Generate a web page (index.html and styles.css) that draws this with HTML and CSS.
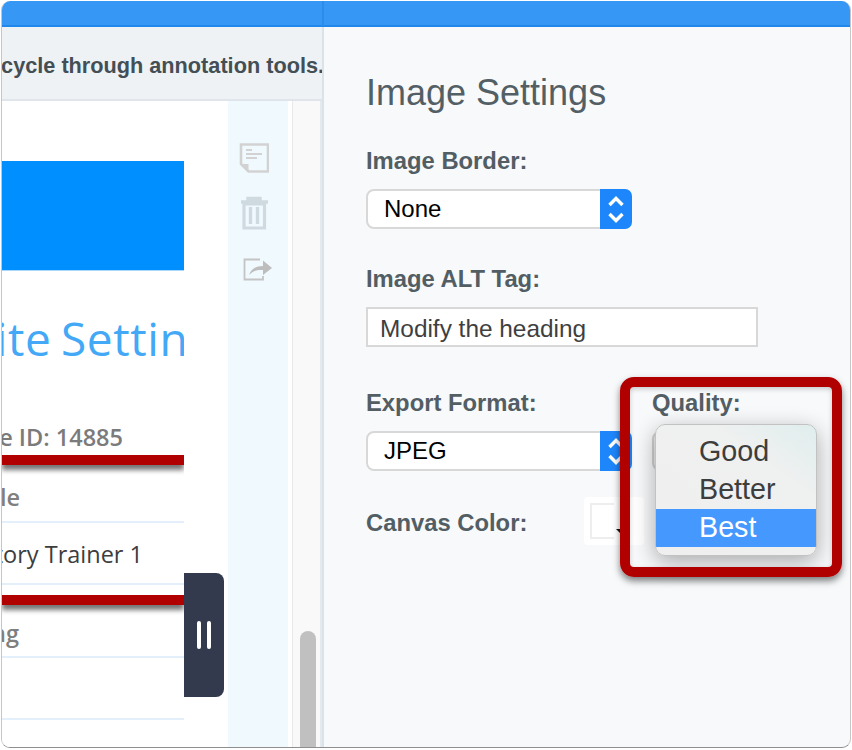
FILE: index.html
```html
<!DOCTYPE html>
<html lang="en">
<head>
<meta charset="utf-8">
<title>Image Settings</title>
<link rel="stylesheet" href="styles.css">
</head>
<body>
<div class="window">
  <section class="left">
    <div class="topbar"></div>
    <div class="hint"><span class="hint-text">Use the tab key to cycle through annotation tools.</span></div>
    <div class="work">
      <div class="canvas">
        <div class="shot">
          <div class="banner"></div>
          <div class="site-title"><span>Site Settings</span></div>
          <div class="site-id"><span>Site ID: 14885</span></div>
          <div class="row row-a"><span>Title</span></div>
          <div class="row row-b"><span>Factory Trainer 1</span></div>
          <div class="row row-c"><span>Tagline long</span></div>
          <div class="row row-d"></div>
          <div class="redline redline-1"></div>
          <div class="redline redline-2"></div>
        </div>
        <div class="handle"><i></i><i></i></div>
      </div>
      <div class="rail">
        <svg class="ic ic-note" width="30" height="30" viewBox="0 0 30 30"><path d="M2 1.500h27v27H9.500L2 21z" fill="none" stroke="#d2d2d2" stroke-width="2.600"/><path d="M2.500 21h7v7z" fill="#d2d2d2"/><path d="M7 7h6M7 11h16M7 15h11" stroke="#d2d2d2" stroke-width="1.800"/></svg>
        <svg class="ic ic-trash" width="30" height="34" viewBox="0 0 30 34"><path d="M2 6h27M9 5V2.500h12V5" fill="none" stroke="#cfd9e0" stroke-width="3.400"/><path d="M5 8v24h20.500V8z" fill="none" stroke="#cfd9e0" stroke-width="3.200"/><path d="M11.500 11v17M18.500 11v17" stroke="#cfd9e0" stroke-width="3.400"/></svg>
        <svg class="ic ic-share" width="30" height="24" viewBox="0 0 30 24"><path d="M17 2.500H1.500v20H20V19" fill="none" stroke="#c4c4c4" stroke-width="1.800"/><path d="M6 18c2-6 7-9 14-9V3.500L29 11l-9 7v-5c-6-.5-10 1-14 5z" fill="#bdbdbd"/></svg>
      </div>
      <div class="gutter"></div>
      <div class="scroll"><div class="thumb"></div></div>
    </div>
  </section>
  <section class="right">
    <div class="topbar"></div>
    <div class="panel">
      <h1 class="heading">Image Settings</h1>
      <label class="label label-border">Image Border:</label>
      <div class="select"><span>None</span><b class="stepper"><svg width="16" height="30" viewBox="0 0 16 30"><path d="M1.500 11l6.500-6.500 6.500 6.500M1.500 20l6.500 6.500 6.500-6.500" fill="none" stroke="#fff" stroke-width="3.400"/></svg></b></div>
      <label class="label label-alt">Image ALT Tag:</label>
      <div class="textbox">Modify the heading</div>
      <div class="columns">
        <div class="col-format">
          <label class="label">Export Format:</label>
          <div class="select"><span>JPEG</span><b class="stepper"><svg width="16" height="30" viewBox="0 0 16 30"><path d="M1.500 11l6.500-6.500 6.500 6.500M1.500 20l6.500 6.500 6.500-6.500" fill="none" stroke="#fff" stroke-width="3.400"/></svg></b></div>
        </div>
        <div class="col-quality">
          <label class="label">Quality:</label>
          <div class="quality-under"></div>
        </div>
      </div>
      <div class="canvas-color">
        <label class="label">Canvas Color:</label>
        <div class="swatch"><i></i><em></em></div>
      </div>
    </div>
    <div class="menu">
      <div class="opt">Good</div>
      <div class="opt">Better</div>
      <div class="opt sel">Best</div>
    </div>
    <div class="callout"></div>
  </section>
</div>
</body>
</html>
```
FILE: styles.css
```css
* { box-sizing: border-box; }
html, body { margin: 0; height: 100%; background: #fff; }
body { padding: 1px 1px 2px 1px; overflow: hidden; font-family: "Liberation Sans", Arial, sans-serif; }
.window {
  display: flex;
  height: 747px;
  border-radius: 9px;
  overflow: hidden;
  border-left: 1px solid #c6c6c6;
  border-bottom: 1px solid #8f8f8f;
  border-right: 1px solid #c6c6c6;
  background: #f7f9fb;
}
.left { width: 322px; flex: none; display: flex; flex-direction: column; border-right: 2px solid #dbe3ea; }
.right { flex: 1; position: relative; display: flex; flex-direction: column; }
.topbar { height: 26px; flex: none; background: #3797f5; border-bottom: 2px solid #1f88ea; }
.left .topbar { margin-right: -2px; border-right: 2px solid #2b8de9; }
.hint { height: 74px; flex: none; background: #eff2f5; border-bottom: 2px solid #dfe5ea; display: flex; justify-content: flex-end; align-items: center; overflow: hidden; padding-top: 6px; white-space: nowrap; }
.hint-text { font-size: 21.700px; font-weight: 700; color: #434f55; margin-right: -2px; }
.work { flex: 1; display: flex; min-height: 0; }
.canvas { width: 226px; flex: none; background: #fff; position: relative; }
.shot { width: 182px; overflow: hidden; padding-top: 60px; position: relative; height: 100%; }
.banner { height: 110px; background: #008ffe; border-bottom: 1px solid #a9d8fb; }
.site-title { margin-top: 39px; font: 400 46px/56px "Open Sans", "Noto Sans", sans-serif; letter-spacing: .6px; word-spacing: -3px; color: #43a9f6; white-space: nowrap; margin-left: -32px; }
.site-id { margin-top: 53px; height: 36px; display: flex; justify-content: flex-end; margin-right: 61px; white-space: nowrap; font: 600 23.500px/36px "Open Sans", "Noto Sans", sans-serif; color: #7b7b7b; }
.row { white-space: nowrap; font: 600 23.500px/36px "Open Sans", "Noto Sans", sans-serif; border-bottom: 2px solid #e3f0fb; display: flex; justify-content: flex-end; }
.row-a { height: 68px; padding: 24px 164px 0 0; color: #7f7f7f; }
.row-b { height: 62px; padding: 13px 41px 0 0; color: #3d3d3d; font-weight: 500; }
.row-c { height: 73px; padding: 30px 165px 0 0; color: #7f7f7f; }
.row-d { height: 62px; }
.redline { position: absolute; left: 0; right: 0; height: 10px; background: #b10000; box-shadow: 0 5px 5px rgba(0,0,0,.55); }
.redline-1 { top: 354px; }
.redline-2 { top: 494px; }
.handle { position: absolute; left: 182px; top: 472px; width: 40px; height: 124px; background: #333a4d; border-radius: 0 8px 8px 0; display: flex; justify-content: center; align-items: center; gap: 6px; }
.handle i { width: 4px; height: 28px; background: #fff; border-radius: 2px; }
.rail { width: 60px; flex: none; background: #f0f9fe; display: flex; flex-direction: column; align-items: center; padding-top: 42px; }
.ic { display: block; }
.ic-note { margin-left: -8px; }
.ic-trash { margin-top: 23px; margin-left: -9px; }
.ic-share { margin-top: 27px; margin-left: 0; }
.gutter { width: 4px; flex: none; background: #fff; }
.scroll { flex: 1; background: #f9f9f9; border-left: 1px solid #e9e9e9; border-right: 2px solid #e4e9ee; padding-left: 7px; display: flex; flex-direction: column; justify-content: flex-end; }
.thumb { width: 16px; height: 116px; background: #c0c0c0; border-radius: 8px 8px 0 0; }
.panel { padding: 0 0 0 42px; flex: 1; }
.heading { margin: 43px 0 0; font-size: 36px; line-height: 46px; font-weight: 400; color: #535f65; }
.label { display: block; font-size: 23.800px; line-height: 24px; font-weight: 700; color: #525e64; }
.label-border { margin-top: 33px; }
.select { margin-top: 16px; width: 266px; padding-left: 16px; height: 40px; background: #fff; border: 2px solid #d8d8d8; border-radius: 8px; position: relative; display: flex; align-items: center; font-size: 24px; color: #000; }
.stepper { position: absolute; right: -2px; top: -2px; bottom: -2px; width: 32px; background: #1e86fb; border-radius: 0 7px 7px 0; display: flex; justify-content: center; align-items: center; }
.label-alt { margin-top: 38px; }
.textbox { margin-top: 16px; width: 392px; height: 40px; background: #fff; border: 2px solid #d8d8d8; font-size: 24.400px; color: #3f3f3f; padding-left: 12px; line-height: 40px; }
.columns { display: flex; margin-top: 44px; }
.col-format { width: 286px; }
.col-quality { flex: 1; }
.quality-under { width: 60px; height: 40px; margin-top: 16px; background: #eee; border: 2px solid #d0d0d0; border-radius: 8px; }
.canvas-color { display: flex; align-items: center; margin-top: 26px; height: 48px; }
.canvas-color .label { width: 218px; padding-top: 4px; }
.swatch { width: 60px; height: 48px; background: #fff; border-radius: 4px; padding: 6px; position: relative; }
.swatch i { display: block; width: 24px; height: 36px; border: 2px solid #eeeeee; border-right: 0; }
.swatch em { position: absolute; left: 32px; top: 32px; border: 6px solid transparent; border-top-color: #111; }
.menu { position: absolute; left: 331px; top: 423px; width: 162px; height: 132px; background: linear-gradient(215deg, #dfeeed 0, #eff0f0 30%, #efefef 100%); border: 1px solid #c2c2c2; border-radius: 10px; padding-top: 8px; box-shadow: 0 6px 22px rgba(0,0,0,.32); overflow: hidden; }
.opt { height: 38px; padding-left: 43px; font-size: 28.700px; line-height: 37px; color: #3d3d3d; }
.opt.sel { background: #4598fe; color: #fff; }
.callout { position: absolute; left: 296px; top: 376px; width: 222px; height: 200px; border: 10px solid #b10000; border-radius: 14px; box-shadow: 0 4px 7px rgba(0,0,0,.5), inset 0 2px 5px rgba(0,0,0,.2); }
```
